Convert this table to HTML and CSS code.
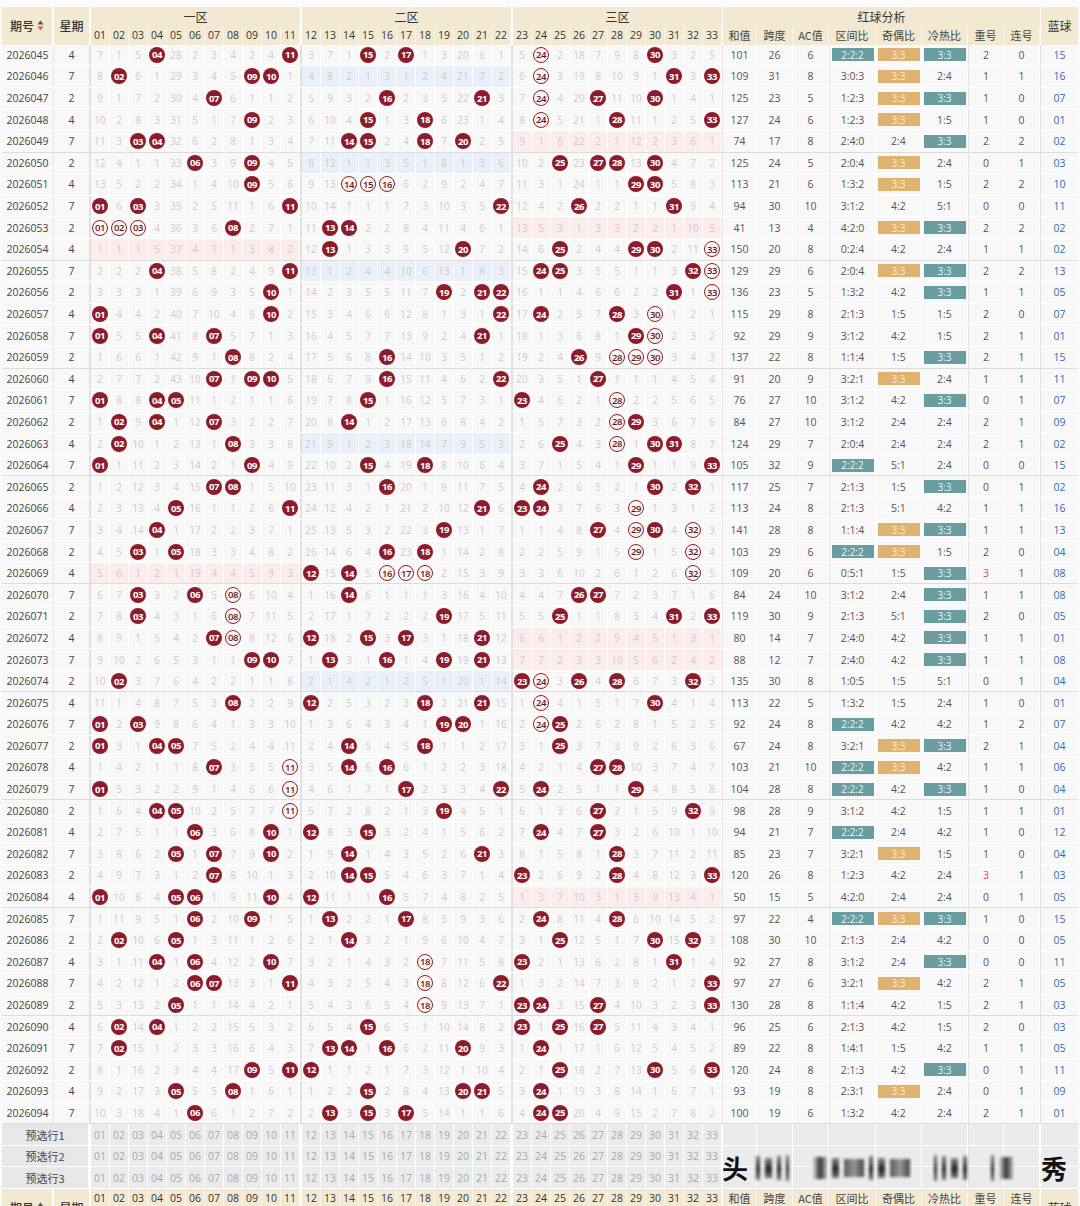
FILE: index.html
```html
<!DOCTYPE html>
<html lang="zh-CN">
<head>
<meta charset="utf-8">
<title>双色球走势图</title>
<link rel="stylesheet" href="styles.css">
</head>
<body>
<div class="wrap" id="wrap">
  <div id="chart"></div>
  <div class="wm">
    <span class="wm-a">头</span>
    <span class="wm-bars">
      <i class="b1"></i><i class="b2"></i><i class="b1"></i><i class="b3"></i><i class="gapx"></i>
      <i class="b4"></i><i class="b2"></i><i class="b5"></i><i class="b1"></i><i class="b2"></i><i class="b5"></i>
      <i class="gapx"></i><i class="b3"></i><i class="b1"></i><i class="b2"></i><i class="b1"></i><i class="gapx"></i><i class="b3"></i><i class="b4"></i>
    </span>
    <span class="wm-a">秀</span>
  </div>
</div>
<script src="app.js"></script>
</body>
</html>
```

FILE: styles.css
```css
* { box-sizing: border-box; }
body {
  margin: 0;
  background: #fafafa;
  font-family: "Open Sans", "Noto Sans CJK SC", sans-serif;
  color: #444;
}
.wrap {
  position: relative;
  width: 1080px;
  padding: 7px 2px 0 2px;
}

/* header */
.thead { display: flex; height: 37.6px; background: #fff; }
.thead > div { background: #f3e9d3; }
.h-issue {
  width: 52px; border-right: 2px solid #fff;
  display: flex; align-items: center; justify-content: center; gap: 3px;
  font: 500 12px "Noto Sans CJK SC", sans-serif; color: #333;
}
.h-issue svg { display: block; }
.h-week {
  width: 35px;
  display: flex; align-items: center; justify-content: center;
  font: 500 12px "Noto Sans CJK SC", sans-serif; color: #333;
}
.hz { width: 211px; border-left: 2px solid #fff; display: flex; flex-direction: column; }
.ht {
  height: 19px; display: flex; align-items: center; justify-content: center;
  font: 12px "Noto Sans CJK SC", sans-serif; color: #333;
}
.hn { flex: 1; display: grid; grid-template-columns: repeat(11, 19px); }
.hc {
  display: flex; align-items: center; justify-content: center;
  font-size: 10.5px; color: #333; border-right: 1px solid rgba(255,255,255,0.55);
}
.hs { width: 318px; border-left: 1px solid #fff; display: flex; flex-direction: column; }
.hsn { flex: 1; display: flex; }
.hl {
  display: flex; align-items: center; justify-content: center;
  font: 11px "Noto Sans CJK SC", sans-serif; color: #444;
  border-right: 1px solid rgba(255,255,255,0.55);
}
.hb {
  width: 38px; border-left: 1px solid #fff;
  display: flex; align-items: center; justify-content: center;
  font: 12px "Noto Sans CJK SC", sans-serif; color: #333;
}

/* body rows */
.row { display: flex; height: 21.6px; border-bottom: 1px solid #fff; background: #f8f8f8; }
.row.sep { border-bottom: 1px solid #dcdcdc; }
.c-issue {
  width: 52px; border-right: 1px solid #e6e6e6;
  display: flex; align-items: center; justify-content: center;
  font-size: 10.5px; color: #444;
}
.c-week {
  width: 35px;
  display: flex; align-items: center; justify-content: center;
  font-size: 10.5px; color: #444;
}
.zone { width: 211px; border-left: 2px solid #e0e0e0; display: grid; grid-template-columns: repeat(11, 19px); }
.zone.pk { background: #fcecec; }
.zone.bl { background: #e9f0f9; }
.cell {
  display: flex; align-items: center; justify-content: center;
  border-right: 1px solid #fff; font-size: 10px; color: #d6c8ca;
}
.ball {
  width: 16px; height: 16px; border-radius: 50%;
  background: #8d1c2b; color: #fff;
  display: flex; align-items: center; justify-content: center;
  font-size: 9.5px; font-weight: 700; letter-spacing: -0.4px;
}
.ball.ring { background: #fdf4f2; border: 1px solid #8d1c2b; color: #5c1a20; font-weight: 600; }

.stats { display: flex; border-left: 1px solid #e0e0e0; }
.sc {
  display: flex; align-items: center; justify-content: center;
  font-size: 10.5px; color: #555; border-right: 1px solid #fff;
}
.sc.gl { border-left: 1px solid #e2e2e2; }
.w34 { width: 34px; } .w36 { width: 36px; } .w47 { width: 47px; } .w46 { width: 46px; }
.badge {
  width: 42px; height: 13px;
  display: flex; align-items: center; justify-content: center;
  font-size: 10px; color: #eef3f3;
}
.teal { background: #6a9da1; }
.gold { background: #dfb36f; color: #f7ecd8; }
.red { color: #d4505a; }
.c-blue {
  width: 38px; border-left: 1px solid #e0e0e0;
  display: flex; align-items: center; justify-content: center;
  font-size: 10.5px; color: #2f6cb4;
}

/* preselect rows */
.row.pre { background: #ebebeb; }
.p-label {
  width: 87px; border-right: 1px solid #fff;
  display: flex; align-items: center; justify-content: center;
  font: 11px "Noto Sans CJK SC", sans-serif; color: #444;
  background: #e7e7e7;
}
.pre .zone { border-left-color: #fff; }
.pre .cell { color: #a9a9a9; font-size: 10.5px; }
.pre .stats, .pre .c-blue { border-left-color: #fff; }

/* watermark */
.wm {
  position: absolute; left: 722px; top: 1148px; width: 345px; height: 40px;
  display: flex; align-items: center; pointer-events: none;
}
.wm-a { font: 700 26px "Noto Sans CJK SC", sans-serif; color: #111; line-height: 1; }
.wm-bars {
  flex: 1; height: 30px; display: flex; align-items: center; gap: 5px;
  padding: 0 8px; filter: blur(1.4px);
}
.wm-bars i { display: block; height: 24px; background: linear-gradient(#888, #222 55%, #777); }
.wm-bars .b1 { width: 4px; }
.wm-bars .b2 { width: 7px; height: 20px; }
.wm-bars .b3 { width: 3px; height: 26px; }
.wm-bars .b4 { width: 14px; height: 22px; background: linear-gradient(90deg, #ddd, #333, #bbb); }
.wm-bars .b5 { width: 20px; height: 18px; background: linear-gradient(90deg, #555, #999, #444); }
.wm-bars .gapx { width: 14px; background: none; }
```

FILE: app.js
```js
(function () {
  var init = [7,1,5,0,28,2,3,4,2,4,0, 3,7,1,0,2,0,1,3,20,6,1, 5,0,2,18,7,9,8,0,3,2,5];
  var draws = [
    [4,11,15,17,24,30],[2,9,10,24,31,33],[7,16,21,24,27,30],[9,15,18,24,28,33],[3,4,14,15,18,20],
    [6,9,25,27,28,30],[9,14,15,16,29,30],[1,3,11,22,26,31],[1,2,3,8,13,14],[13,20,25,29,30,33],
    [4,11,24,25,32,33],[10,19,21,22,31,33],[1,10,22,24,28,30],[1,4,7,21,29,30],[8,16,26,28,29,30],
    [7,9,10,16,22,27],[1,4,5,15,23,28],[2,4,7,14,28,29],[2,8,25,28,30,31],[1,9,15,18,29,33],
    [7,8,16,24,30,32],[5,11,21,23,24,29],[4,19,27,29,30,32],[3,5,16,18,29,32],[12,14,16,17,18,32],
    [3,6,8,14,26,27],[3,8,19,25,31,33],[7,8,12,15,17,21],[9,10,13,16,19,21],[2,23,24,26,28,32],
    [8,12,18,21,24,30],[1,3,19,20,24,25],[1,4,5,14,18,25],[7,11,14,16,27,28],[1,11,17,22,24,29],
    [4,5,11,19,27,32],[6,10,12,15,24,27],[5,7,10,14,21,28],[7,14,15,23,28,33],[1,5,6,10,12,16],
    [6,9,13,17,24,28],[2,5,14,25,30,32],[4,6,10,18,23,31],[6,7,11,18,22,33],[5,18,23,24,27,33],
    [2,4,15,23,25,27],[2,13,14,16,20,24],[9,11,12,25,30,33],[5,8,15,20,21,24],[6,13,15,17,24,25]
  ];
  var extra = [
    [6,'3:3',2,0,'15'],[8,'2:4',1,1,'16'],[5,'3:3',1,0,'07'],[6,'1:5',1,0,'01'],[8,'3:3',2,2,'02'],
    [5,'2:4',0,1,'03'],[6,'1:5',2,2,'10'],[10,'5:1',0,0,'11'],[4,'3:3',2,2,'02'],[8,'2:4',1,1,'02'],
    [6,'3:3',2,2,'13'],[5,'3:3',1,1,'05'],[8,'1:5',2,0,'07'],[9,'1:5',2,1,'01'],[8,'3:3',2,1,'15'],
    [9,'2:4',1,1,'11'],[10,'3:3',0,1,'07'],[10,'2:4',2,1,'09'],[7,'2:4',2,1,'02'],[9,'2:4',0,0,'15'],
    [7,'3:3',0,1,'02'],[8,'4:2',1,1,'16'],[8,'3:3',1,1,'13'],[6,'1:5',2,0,'04'],[6,'3:3',3,1,'08'],
    [10,'3:3',1,1,'08'],[9,'3:3',2,0,'05'],[7,'3:3',1,1,'01'],[7,'3:3',1,1,'08'],[8,'5:1',0,1,'04'],
    [5,'2:4',1,0,'01'],[8,'4:2',1,2,'07'],[8,'3:3',2,1,'04'],[10,'4:2',1,1,'06'],[8,'3:3',1,0,'04'],
    [9,'1:5',1,1,'01'],[7,'4:2',1,0,'12'],[7,'1:5',1,0,'04'],[8,'2:4',3,1,'03'],[5,'2:4',0,1,'05'],
    [4,'3:3',1,0,'15'],[10,'4:2',0,0,'05'],[8,'3:3',0,0,'11'],[6,'4:2',2,1,'05'],[8,'1:5',2,1,'03'],
    [6,'1:5',2,0,'03'],[8,'4:2',1,1,'05'],[8,'3:3',0,1,'11'],[8,'2:4',0,1,'09'],[6,'2:4',2,1,'01']
  ];
  var zones = [[1,11],[12,22],[23,33]];
  var zoneNames = ['一区','二区','三区'];
  var shade = ['pk','bl','pk'];
  var statW = ['w34','w36','w36','w47','w46','w46','w36','w36'];
  var labels = ['和值','跨度','AC值','区间比','奇偶比','冷热比','重号','连号'];
  var sortSvg = '<svg width="7" height="11" viewBox="0 0 7 11"><path d="M3.5 0.6L6.6 4.6H0.4Z" fill="#555"/><path d="M3.5 10.4L0.4 6.4H6.6Z" fill="#e0622a"/></svg>';

  function div(cls, text) {
    var d = document.createElement('div');
    if (cls) d.className = cls;
    if (text !== undefined) d.textContent = text;
    return d;
  }
  function pad(n) { return (n < 10 ? '0' : '') + n; }
  function has(i, n) { return i >= 0 && i < draws.length && draws[i].indexOf(n) >= 0; }
  function isRing(i, n) {
    var k;
    for (k = -2; k <= 0; k++) {
      if (has(i, n + k) && has(i, n + k + 1) && has(i, n + k + 2)) return true;
      if (has(i + k, n) && has(i + k + 1, n) && has(i + k + 2, n)) return true;
    }
    return false;
  }

  function head(rev) {
    var h = div('thead' + (rev ? ' rev' : ''));
    var iss = div('h-issue');
    iss.innerHTML = '<span>期号</span>' + sortSvg;
    h.appendChild(iss);
    h.appendChild(div('h-week', '星期'));
    zones.forEach(function (z, zi) {
      var zc = div('hz');
      var tt = div('ht', zoneNames[zi]);
      var nn = div('hn');
      for (var n = z[0]; n <= z[1]; n++) nn.appendChild(div('hc', pad(n)));
      if (rev) { zc.appendChild(nn); zc.appendChild(tt); } else { zc.appendChild(tt); zc.appendChild(nn); }
      h.appendChild(zc);
    });
    var s = div('hs');
    var st = div('ht', '红球分析');
    var sn = div('hsn');
    labels.forEach(function (l, i) { sn.appendChild(div('hl ' + statW[i], l)); });
    if (rev) { s.appendChild(sn); s.appendChild(st); } else { s.appendChild(st); s.appendChild(sn); }
    h.appendChild(s);
    h.appendChild(div('hb', '蓝球'));
    return h;
  }

  var chart = document.getElementById('chart');
  chart.appendChild(head(false));

  var om = new Array(34).fill(0);
  draws.forEach(function (d, i) {
    var n;
    for (n = 1; n <= 33; n++) {
      if (d.indexOf(n) >= 0) om[n] = 0;
      else om[n] = (i === 0) ? init[n - 1] : om[n] + 1;
    }
    var r = div('row' + ((i + 1) % 5 === 0 ? ' sep' : ''));
    r.appendChild(div('c-issue', String(2026045 + i)));
    r.appendChild(div('c-week', String([4, 7, 2][i % 3])));
    var counts = [];
    zones.forEach(function (z, zi) {
      var cnt = 0, m;
      for (m = z[0]; m <= z[1]; m++) if (d.indexOf(m) >= 0) cnt++;
      counts.push(cnt);
      var zc = div('zone' + (cnt === 0 ? ' ' + shade[zi] : ''));
      for (m = z[0]; m <= z[1]; m++) {
        var c = div('cell');
        if (d.indexOf(m) >= 0) c.appendChild(div('ball' + (isRing(i, m) ? ' ring' : ''), pad(m)));
        else c.textContent = om[m];
        zc.appendChild(c);
      }
      r.appendChild(zc);
    });
    var sum = d.reduce(function (a, b) { return a + b; }, 0);
    var span = Math.max.apply(null, d) - Math.min.apply(null, d);
    var odd = d.filter(function (x) { return x % 2 === 1; }).length;
    var zr = counts.join(':');
    var oe = odd + ':' + (6 - odd);
    var e = extra[i];
    var s = div('stats');
    s.appendChild(div('sc w34', String(sum)));
    s.appendChild(div('sc w36', String(span)));
    s.appendChild(div('sc w36', String(e[0])));
    var c1 = div('sc w47 gl');
    c1.appendChild(div(zr === '2:2:2' ? 'badge teal' : '', zr));
    s.appendChild(c1);
    var c2 = div('sc w46');
    c2.appendChild(div(oe === '3:3' ? 'badge gold' : '', oe));
    s.appendChild(c2);
    var c3 = div('sc w46');
    c3.appendChild(div(e[1] === '3:3' ? 'badge teal' : '', e[1]));
    s.appendChild(c3);
    s.appendChild(div('sc w36 gl' + (e[2] >= 3 ? ' red' : ''), String(e[2])));
    s.appendChild(div('sc w36', String(e[3])));
    r.appendChild(s);
    r.appendChild(div('c-blue', e[4]));
    chart.appendChild(r);
  });

  for (var k = 1; k <= 3; k++) {
    var r = div('row pre');
    r.appendChild(div('p-label', '预选行' + k));
    zones.forEach(function (z) {
      var zc = div('zone');
      for (var m = z[0]; m <= z[1]; m++) zc.appendChild(div('cell', pad(m)));
      r.appendChild(zc);
    });
    var s = div('stats');
    statW.forEach(function (w, i) { s.appendChild(div('sc ' + w + (i === 3 || i === 6 ? ' gl' : ''))); });
    r.appendChild(s);
    r.appendChild(div('c-blue'));
    chart.appendChild(r);
  }
  chart.appendChild(head(true));
})();
```
